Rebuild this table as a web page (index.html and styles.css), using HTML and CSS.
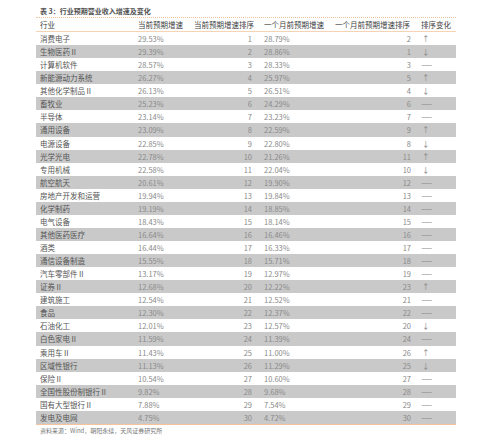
FILE: index.html
```html
<!DOCTYPE html>
<html lang="zh">
<head>
<meta charset="utf-8">
<link rel="stylesheet" href="styles.css">
</head>
<body>
<div class="wrap">
  <div class="title">表 3：行业预期营业收入增速及变化</div>
  <div class="table">
    <div class="row head">
      <div class="c1">行业</div>
      <div class="c2">当前预期增速</div>
      <div class="c3h">当前预期增速排序</div>
      <div class="c4">一个月前预期增速</div>
      <div class="c5h">一个月前预期增速排序</div>
      <div class="c6h">排序变化</div>
    </div>
    <div class="row"><div class="c1">消费电子</div><div class="c2">29.53%</div><div class="c3">1</div><div class="c4">28.79%</div><div class="c5">2</div><div class="c6">↑</div></div>
    <div class="row alt"><div class="c1">生物医药Ⅱ</div><div class="c2">29.39%</div><div class="c3">2</div><div class="c4">28.86%</div><div class="c5">1</div><div class="c6">↓</div></div>
    <div class="row"><div class="c1">计算机软件</div><div class="c2">28.57%</div><div class="c3">3</div><div class="c4">28.33%</div><div class="c5">3</div><div class="c6"><span class="dash">—</span></div></div>
    <div class="row alt"><div class="c1">新能源动力系统</div><div class="c2">26.27%</div><div class="c3">4</div><div class="c4">25.97%</div><div class="c5">5</div><div class="c6">↑</div></div>
    <div class="row"><div class="c1">其他化学制品Ⅱ</div><div class="c2">26.13%</div><div class="c3">5</div><div class="c4">26.51%</div><div class="c5">4</div><div class="c6">↓</div></div>
    <div class="row alt"><div class="c1">畜牧业</div><div class="c2">25.23%</div><div class="c3">6</div><div class="c4">24.29%</div><div class="c5">6</div><div class="c6"><span class="dash">—</span></div></div>
    <div class="row"><div class="c1">半导体</div><div class="c2">23.14%</div><div class="c3">7</div><div class="c4">23.23%</div><div class="c5">7</div><div class="c6"><span class="dash">—</span></div></div>
    <div class="row alt"><div class="c1">通用设备</div><div class="c2">23.09%</div><div class="c3">8</div><div class="c4">22.59%</div><div class="c5">9</div><div class="c6">↑</div></div>
    <div class="row"><div class="c1">电源设备</div><div class="c2">22.85%</div><div class="c3">9</div><div class="c4">22.80%</div><div class="c5">8</div><div class="c6">↓</div></div>
    <div class="row alt"><div class="c1">光学光电</div><div class="c2">22.78%</div><div class="c3">10</div><div class="c4">21.26%</div><div class="c5">11</div><div class="c6">↑</div></div>
    <div class="row"><div class="c1">专用机械</div><div class="c2">22.58%</div><div class="c3">11</div><div class="c4">22.04%</div><div class="c5">10</div><div class="c6">↓</div></div>
    <div class="row alt"><div class="c1">航空航天</div><div class="c2">20.61%</div><div class="c3">12</div><div class="c4">19.90%</div><div class="c5">12</div><div class="c6"><span class="dash">—</span></div></div>
    <div class="row"><div class="c1">房地产开发和运营</div><div class="c2">19.94%</div><div class="c3">13</div><div class="c4">19.84%</div><div class="c5">13</div><div class="c6"><span class="dash">—</span></div></div>
    <div class="row alt"><div class="c1">化学制药</div><div class="c2">19.19%</div><div class="c3">14</div><div class="c4">18.85%</div><div class="c5">14</div><div class="c6"><span class="dash">—</span></div></div>
    <div class="row"><div class="c1">电气设备</div><div class="c2">18.43%</div><div class="c3">15</div><div class="c4">18.14%</div><div class="c5">15</div><div class="c6"><span class="dash">—</span></div></div>
    <div class="row alt"><div class="c1">其他医药医疗</div><div class="c2">16.64%</div><div class="c3">16</div><div class="c4">16.46%</div><div class="c5">16</div><div class="c6"><span class="dash">—</span></div></div>
    <div class="row"><div class="c1">酒类</div><div class="c2">16.44%</div><div class="c3">17</div><div class="c4">16.33%</div><div class="c5">17</div><div class="c6"><span class="dash">—</span></div></div>
    <div class="row alt"><div class="c1">通信设备制造</div><div class="c2">15.55%</div><div class="c3">18</div><div class="c4">15.71%</div><div class="c5">18</div><div class="c6"><span class="dash">—</span></div></div>
    <div class="row"><div class="c1">汽车零部件Ⅱ</div><div class="c2">13.17%</div><div class="c3">19</div><div class="c4">12.97%</div><div class="c5">19</div><div class="c6"><span class="dash">—</span></div></div>
    <div class="row alt"><div class="c1">证券Ⅱ</div><div class="c2">12.68%</div><div class="c3">20</div><div class="c4">12.22%</div><div class="c5">23</div><div class="c6">↑</div></div>
    <div class="row"><div class="c1">建筑施工</div><div class="c2">12.54%</div><div class="c3">21</div><div class="c4">12.52%</div><div class="c5">21</div><div class="c6"><span class="dash">—</span></div></div>
    <div class="row alt"><div class="c1">食品</div><div class="c2">12.30%</div><div class="c3">22</div><div class="c4">12.37%</div><div class="c5">22</div><div class="c6"><span class="dash">—</span></div></div>
    <div class="row"><div class="c1">石油化工</div><div class="c2">12.01%</div><div class="c3">23</div><div class="c4">12.57%</div><div class="c5">20</div><div class="c6">↓</div></div>
    <div class="row alt"><div class="c1">白色家电Ⅱ</div><div class="c2">11.59%</div><div class="c3">24</div><div class="c4">11.39%</div><div class="c5">24</div><div class="c6"><span class="dash">—</span></div></div>
    <div class="row"><div class="c1">乘用车Ⅱ</div><div class="c2">11.43%</div><div class="c3">25</div><div class="c4">11.00%</div><div class="c5">26</div><div class="c6">↑</div></div>
    <div class="row alt"><div class="c1">区域性银行</div><div class="c2">11.13%</div><div class="c3">26</div><div class="c4">11.29%</div><div class="c5">25</div><div class="c6">↓</div></div>
    <div class="row"><div class="c1">保险Ⅱ</div><div class="c2">10.54%</div><div class="c3">27</div><div class="c4">10.60%</div><div class="c5">27</div><div class="c6"><span class="dash">—</span></div></div>
    <div class="row alt"><div class="c1">全国性股份制银行Ⅱ</div><div class="c2">9.82%</div><div class="c3">28</div><div class="c4">9.68%</div><div class="c5">28</div><div class="c6"><span class="dash">—</span></div></div>
    <div class="row"><div class="c1">国有大型银行Ⅱ</div><div class="c2">7.88%</div><div class="c3">29</div><div class="c4">7.54%</div><div class="c5">29</div><div class="c6"><span class="dash">—</span></div></div>
    <div class="row alt last"><div class="c1">发电及电网</div><div class="c2">4.75%</div><div class="c3">30</div><div class="c4">4.72%</div><div class="c5">30</div><div class="c6"><span class="dash">—</span></div></div>
  </div>
  <div class="source">资料来源：Wind，朝阳永续，天风证券研究所</div>
</div>
</body>
</html>
```

FILE: styles.css
```css
html, body {
  margin: 0;
  padding: 0;
  background: #ffffff;
}
body {
  font-family: "Noto Sans CJK SC", "Noto Sans", "Liberation Sans", sans-serif;
  color: #555555;
}
.wrap {
  padding-left: 36px;
  width: 420px;
}
.title {
  box-sizing: border-box;
  height: 17px;
  padding: 6px 0 0 4px;
  font-size: 7px;
  line-height: 10px;
  font-weight: 700;
  color: #505050;
  white-space: nowrap;
}
.table {
  width: 420px;
}
.row {
  display: grid;
  grid-template-columns: 98px 56px 70px 71px 84px 41px;
  height: 13.07px;
  line-height: 13.07px;
  font-size: 7.5px;
  white-space: nowrap;
}
.row.alt {
  background: #c9c9c9;
}
.row.head {
  box-sizing: border-box;
  height: 15px;
  line-height: 13px;
  border-top: 1px dotted #f0c29a;
  border-bottom: 1px solid #f5d3b4;
  color: #3e3e3e;
  background: #ffffff;
}
.row.last {
  border-bottom: 1px solid #f6c39c;
}
.c1 {
  padding-left: 4px;
  color: #555555;
}
.head .c1, .head .c2, .head .c4 {
  color: #3e3e3e;
}
.c2, .c4 {
  padding-left: 4px;
  color: #8a8a8a;
}
.c3, .c5 {
  text-align: right;
  padding-right: 8px;
  color: #8a8a8a;
}
.c5 {
  padding-right: 4px;
}
.c3h, .c5h {
  padding-left: 4px;
}
.c6h {
  padding-left: 6px;
}
.c6 {
  padding-left: 7px;
  color: #888888;
}
.dash {
  display: inline-block;
  margin-left: -1px;
  transform: scaleX(1.7);
  transform-origin: left center;
}
.source {
  padding: 1px 0 0 4px;
  font-size: 6px;
  line-height: 10px;
  color: #777777;
  white-space: nowrap;
}
```
